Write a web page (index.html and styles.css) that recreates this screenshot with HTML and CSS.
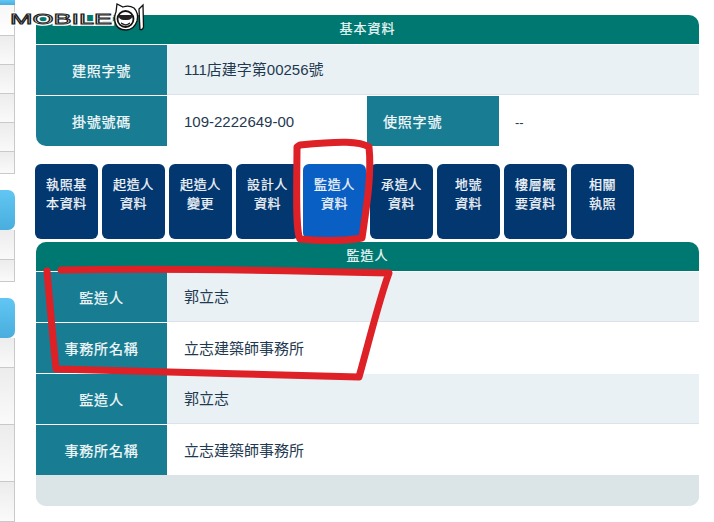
FILE: index.html
```html
<!DOCTYPE html>
<html lang="zh-Hant">
<head>
<meta charset="utf-8">
<title>監造人資料</title>
<link rel="stylesheet" href="styles.css">
</head>
<body>
<div class="page">
  <aside class="side">
    <div class="s-item s-blue h5"></div>
    <div class="s-item s-first h31"></div>
    <div class="s-item h29"></div>
    <div class="s-item h29"></div>
    <div class="s-item h29"></div>
    <div class="s-item h29"></div>
    <div class="s-item h22"></div>
    <div class="s-gap h16"></div>
    <div class="s-item s-blue s-round h40"></div>
    <div class="s-item h30"></div>
    <div class="s-item h22"></div>
    <div class="s-gap h16"></div>
    <div class="s-item s-blue s-round h40"></div>
    <div class="s-item h30"></div>
    <div class="s-item h57"></div>
    <div class="s-item h57"></div>
    <div class="s-item h40"></div>
  </aside>
  <main class="main">
    <section class="card card-top">
      <h2 class="card-head">基本資料</h2>
      <div class="row row-alt">
        <div class="label">建照字號</div>
        <div class="value">111店建字第00256號</div>
      </div>
      <div class="row row-last">
        <div class="label label-corner">掛號號碼</div>
        <div class="value value-mid">109-2222649-00</div>
        <div class="label label-left">使照字號</div>
        <div class="value value-dash">--</div>
      </div>
    </section>
    <nav class="tabs">
      <a class="tab">執照基<br>本資料</a>
      <a class="tab">起造人<br>資料</a>
      <a class="tab">起造人<br>變更</a>
      <a class="tab">設計人<br>資料</a>
      <a class="tab tab-on">監造人<br>資料</a>
      <a class="tab">承造人<br>資料</a>
      <a class="tab">地號<br>資料</a>
      <a class="tab">樓層概<br>要資料</a>
      <a class="tab">相關<br>執照</a>
    </nav>
    <section class="card card-bottom">
      <h2 class="card-head">監造人</h2>
      <div class="row row-alt">
        <div class="label">監造人</div>
        <div class="value">郭立志</div>
      </div>
      <div class="row">
        <div class="label">事務所名稱</div>
        <div class="value">立志建築師事務所</div>
      </div>
      <div class="row row-alt">
        <div class="label">監造人</div>
        <div class="value">郭立志</div>
      </div>
      <div class="row row-end">
        <div class="label">事務所名稱</div>
        <div class="value">立志建築師事務所</div>
      </div>
      <div class="card-foot"></div>
    </section>
  </main>
</div>

<svg class="logo" width="146" height="32" viewBox="0 0 146 32" aria-label="Mobile01">
  <text class="logo-halo" x="10" y="24" textLength="102" lengthAdjust="spacingAndGlyphs">MOBILE</text>
  <text class="logo-text" x="10" y="24" textLength="102" lengthAdjust="spacingAndGlyphs">MOBILE</text>
  <path d="M116 12 L117 4 L123 7 Q129 5 134 8 Q139 13 137 21 Q134 30 126 30 Q117 30 115 22 Q114 16 116 12 Z" fill="#fff" stroke="#111" stroke-width="1.300"/>
  <path d="M139 9 L143 5 L143.500 27 Q143 30 140 29.500 L139.500 20 Z" fill="#fff" stroke="#111" stroke-width="1.300"/>
  <circle cx="125.500" cy="19" r="8" fill="#fff" stroke="#111" stroke-width="1.800"/>
  <path d="M118 15 L133 15 Q132 20 127 20 L124 20 Q119 20 118 15 Z" fill="#222"/>
  <path d="M121 23 Q125.500 27 130 23 L126 25 Z" fill="#222" stroke="#222"/>
</svg>

<svg class="marks" width="714" height="522" viewBox="0 0 714 522" aria-hidden="true">
  <path class="mark" d="M61 270 C160 268 270 270 389 273 C380 297 372 330 359 377 C260 374 150 372 56 369 C53 340 50 305 47 271"/>
  <path class="mark" d="M300 145 C340 141 360 141 369 147 C372 175 366 210 362 238 C345 241 320 241 300 239 C295 230 297 180 297 147 Z"/>
</svg>
</body>
</html>
```

FILE: styles.css
```css
* { box-sizing: border-box; }
html, body { margin: 0; height: 100%; background: #fff; overflow: hidden; }
body {
  font-family: "Liberation Sans", "Noto Sans CJK TC", sans-serif;
  color: #1f3a50;
}
.page { display: flex; width: 714px; height: 522px; }

/* sidebar strip */
.side { width: 15px; flex: none; display: flex; flex-direction: column; margin-right: 21px; }
.s-item {
  border-right: 1px solid #c9c9c9;
  border-bottom: 1px solid #c9c9c9;
  background: linear-gradient(#ececec, #fafafa);
}
.s-first { background: linear-gradient(#f7f7f7, #fff); }
.s-blue { border: 0; background: linear-gradient(#62c6f4, #49aedd); }
.s-round { border-radius: 0 7px 7px 0; }
.s-gap { background: #fff; }
.h5 { height: 5px; } .h16 { height: 16px; } .h22 { height: 22px; } .h29 { height: 29px; }
.h30 { height: 30px; } .h31 { height: 31px; } .h40 { height: 40px; } .h57 { height: 57px; }

.main { width: 663px; flex: none; padding-top: 15px; }

/* cards */
.card { border-radius: 10px 10px 0 0; overflow: hidden; }
.card-head {
  margin: 0;
  height: 29px;
  background: #007872;
  color: #eef8f7;
  font-size: 13px;
  font-weight: 400;
  line-height: 28px;
  letter-spacing: 1px;
  text-align: center;
  -webkit-text-stroke: .2px #eef8f7;
}
.row {
  display: flex;
  height: 51px;
  border-top: 1px solid #fff;
  background: #fff;
}
.row-alt { background: #eaf1f4; }
.row-alt .value { border-bottom: 1px solid #dbe3e8; }
.label {
  width: 131px;
  flex: none;
  background: #187c92;
  color: #f3f9fb;
  font-size: 14px;
  letter-spacing: .8px;
  -webkit-text-stroke: .25px #f3f9fb;
  display: flex;
  align-items: center;
  justify-content: center;
  padding-bottom: 1px;
}
.label-corner { border-radius: 0 0 0 10px; }
.label-left { justify-content: flex-start; padding-left: 16px; width: 132px; }
.value {
  flex: 1;
  min-width: 0;
  padding: 0 0 2px 17px;
  font-size: 15px;
  display: flex;
  align-items: center;
}
.value-mid { flex: none; width: 200px; padding-bottom: 0; }
.value-dash { font-size: 13px; padding: 3px 0 0 16px; }
.card-top { height: 131px; }

/* tabs */
.tabs { display: flex; gap: 4px; margin: 18px 0 3px -1px; height: 75px; }
.tab {
  width: 63px;
  height: 75px;
  padding-top: 11px;
  border-radius: 6px;
  background: #03376f;
  color: #f1f5fa;
  font-size: 13px;
  line-height: 19px;
  letter-spacing: .6px;
  -webkit-text-stroke: .25px #f1f5fa;
  text-align: center;
}
.tab-on { background: #0a5fc4; }

.card-bottom { border-radius: 10px; height: 264px; background: #dbe5e7; }
.card-foot { height: 31px; background: #dbe5e7; }

/* overlays */
.logo { position: absolute; left: 0; top: 0; }
.logo-halo, .logo-text {
  font-family: "Liberation Sans", sans-serif;
  font-size: 15px;
  font-weight: 400;
}
.logo-halo { fill: none; stroke: #fff; stroke-width: 3.500px; }
.logo-text {
  fill: #fff;
  stroke: #222;
  stroke-width: .9px;
}
.marks { position: absolute; left: 0; top: 0; pointer-events: none; }
.mark {
  fill: none;
  stroke: #de2027;
  stroke-width: 7px;
  stroke-linecap: round;
  stroke-linejoin: round;
}
```
